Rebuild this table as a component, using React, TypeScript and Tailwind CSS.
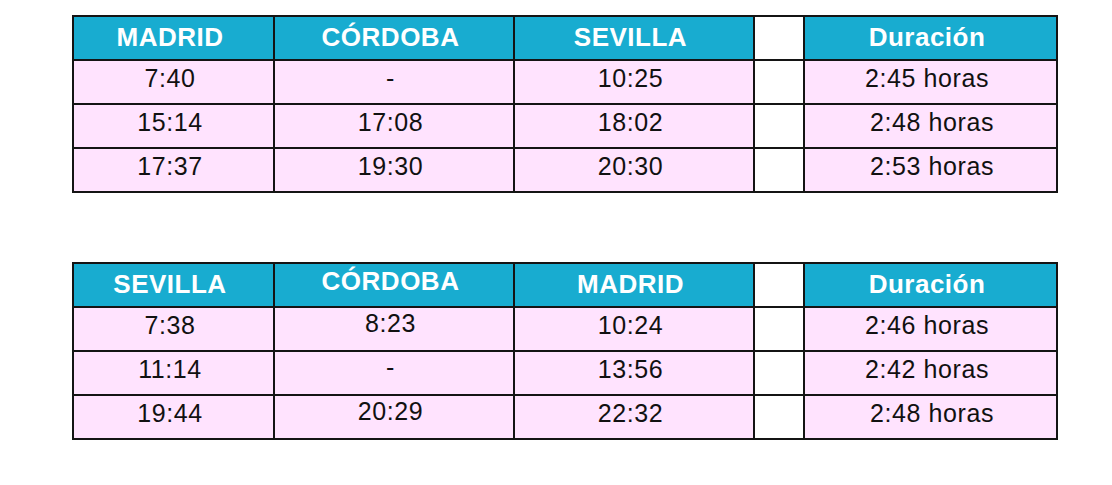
import React from "react";

type Cell = { t: string; shiftR?: boolean };

const cols = ["w-[201px]", "w-[240px]", "w-[240px]", "w-[50px]", "w-[253px]"];

function Table({ header, rows, upCol }: { header: string[]; rows: Cell[][]; upCol?: number }) {
  return (
    <div className="flex flex-col border-l-2 border-t-2 border-[#141414] w-[986px]">
      <div className="flex h-[44px]">
        {header.map((h, i) => (
          <div
            key={i}
            className={`${cols[i]} shrink-0 h-full border-r-2 border-b-2 border-[#141414] flex items-center justify-center pr-[7px] ${
              i === 3 ? "bg-white" : "bg-[#18acd0]"
            } ${upCol === i ? "pb-[8px]" : "pb-[3px]"} text-white font-bold text-[26px] tracking-[0.5px] leading-none`}
          >
            {h}
          </div>
        ))}
      </div>
      {rows.map((r, ri) => (
        <div key={ri} className="flex h-[44px]">
          {r.map((c, i) => (
            <div
              key={i}
              className={`${cols[i]} shrink-0 h-full border-r-2 border-b-2 border-[#141414] flex items-center justify-center ${
                c.shiftR ? "pl-[3px] pr-0" : "pr-[7px]"
              } ${i === 3 ? "bg-white" : "bg-[#ffe3fe]"} ${
                upCol === i ? "pb-[12px]" : "pb-[7px]"
              } text-[#111] text-[25px] tracking-[0.6px] leading-none`}
            >
              {c.t}
            </div>
          ))}
        </div>
      ))}
    </div>
  );
}

const c = (t: string, shiftR = false): Cell => ({ t, shiftR });

export default function App() {
  return (
    <div
      className="w-[1112px] h-[485px] bg-white pl-[72px] pt-[15px] flex flex-col gap-[69px]"
      style={{ fontFamily: '"Liberation Sans", Arial, sans-serif' }}
    >
      <Table
        header={["MADRID", "CÓRDOBA", "SEVILLA", "", "Duración"]}
        rows={[
          [c("7:40"), c("-"), c("10:25"), c(""), c("2:45 horas")],
          [c("15:14"), c("17:08"), c("18:02"), c(""), c("2:48 horas", true)],
          [c("17:37"), c("19:30"), c("20:30"), c(""), c("2:53 horas", true)],
        ]}
      />
      <Table
        header={["SEVILLA", "CÓRDOBA", "MADRID", "", "Duración"]}
        upCol={1}
        rows={[
          [c("7:38"), c("8:23"), c("10:24"), c(""), c("2:46 horas")],
          [c("11:14"), c("-"), c("13:56"), c(""), c("2:42 horas")],
          [c("19:44"), c("20:29"), c("22:32"), c(""), c("2:48 horas", true)],
        ]}
      />
    </div>
  );
}
